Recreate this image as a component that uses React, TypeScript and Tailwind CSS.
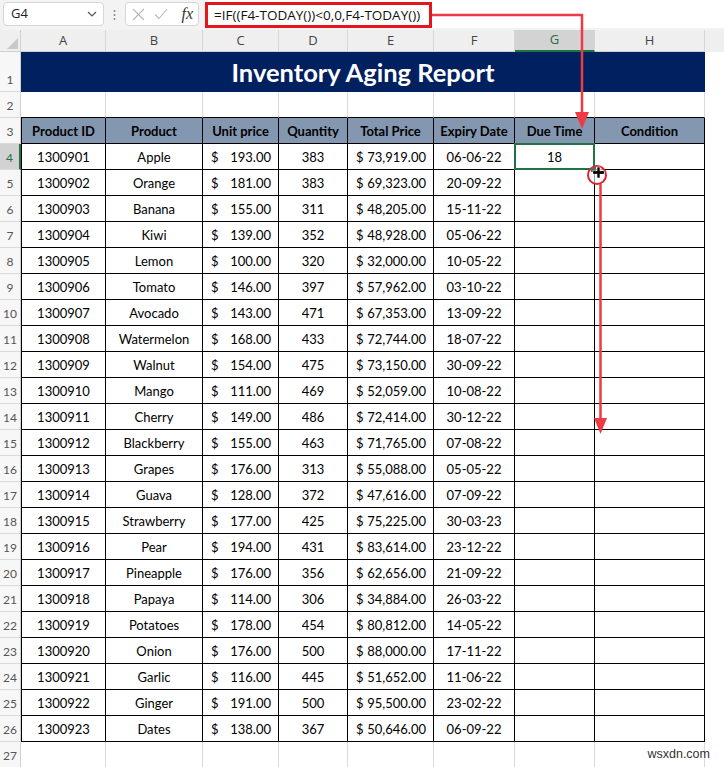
import React from "react";

const rows = [
  ["1300901", "Apple", "193.00", "383", "73,919.00", "06-06-22"],
  ["1300902", "Orange", "181.00", "383", "69,323.00", "20-09-22"],
  ["1300903", "Banana", "155.00", "311", "48,205.00", "15-11-22"],
  ["1300904", "Kiwi", "139.00", "352", "48,928.00", "05-06-22"],
  ["1300905", "Lemon", "100.00", "320", "32,000.00", "10-05-22"],
  ["1300906", "Tomato", "146.00", "397", "57,962.00", "03-10-22"],
  ["1300907", "Avocado", "143.00", "471", "67,353.00", "13-09-22"],
  ["1300908", "Watermelon", "168.00", "433", "72,744.00", "18-07-22"],
  ["1300909", "Walnut", "154.00", "475", "73,150.00", "30-09-22"],
  ["1300910", "Mango", "111.00", "469", "52,059.00", "10-08-22"],
  ["1300911", "Cherry", "149.00", "486", "72,414.00", "30-12-22"],
  ["1300912", "Blackberry", "155.00", "463", "71,765.00", "07-08-22"],
  ["1300913", "Grapes", "176.00", "313", "55,088.00", "05-05-22"],
  ["1300914", "Guava", "128.00", "372", "47,616.00", "07-09-22"],
  ["1300915", "Strawberry", "177.00", "425", "75,225.00", "30-03-23"],
  ["1300916", "Pear", "194.00", "431", "83,614.00", "23-12-22"],
  ["1300917", "Pineapple", "176.00", "356", "62,656.00", "21-09-22"],
  ["1300918", "Papaya", "114.00", "306", "34,884.00", "26-03-22"],
  ["1300919", "Potatoes", "178.00", "454", "80,812.00", "14-05-22"],
  ["1300920", "Onion", "176.00", "500", "88,000.00", "17-11-22"],
  ["1300921", "Garlic", "116.00", "445", "51,652.00", "11-06-22"],
  ["1300922", "Ginger", "191.00", "500", "95,500.00", "23-02-22"],
  ["1300923", "Dates", "138.00", "367", "50,646.00", "06-09-22"],
];

const headers = ["Product ID", "Product", "Unit price", "Quantity", "Total Price", "Expiry Date", "Due Time", "Condition"];
const letters = ["A", "B", "C", "D", "E", "F", "G", "H"];
const widths = ["w-[85px]", "w-[97px]", "w-[76px]", "w-[69px]", "w-[86px]", "w-[81px]", "w-[80px]", "w-[110px]"];

function RowNum({n, h, active}: {n: number; h: string; active?: boolean}) {
  return (
    <div
      className={`${h} w-[21px] shrink-0 flex items-end justify-center pb-[3px] leading-[16px] text-[12px] border-b border-[#dadada] ${
        active ? "bg-[#d2d2d2] text-[#1e6e42] border-r-2 border-r-[#217346]" : "bg-[#f7f7f7] text-[#555] border-r border-r-[#d0d0d0]"
      }`}
    >
      {n}
    </div>
  );
}

function GridRow({n, h, bottomBlack}: {n: number; h: string; bottomBlack?: boolean}) {
  return (
    <div className="flex">
      <RowNum n={n} h={h} />
      {widths.map((w, i) => (
        <div
          key={i}
          className={`${w} ${h} shrink-0 border-r border-r-[#dadada] border-b ${
            bottomBlack ? "border-b-black" : "border-b-[#dadada]"
          }`}
        />
      ))}
    </div>
  );
}

function Money({v}: {v: string}) {
  return (
    <div className="flex h-full items-center justify-between pt-[3px] pl-[8px] pr-[7px]">
      <span>$</span>
      <span>{v}</span>
    </div>
  );
}

function DataRow({r, n}: {r: string[]; n: number}) {
  const cell = "h-[26px] shrink-0 border-r border-b border-black";
  const center = "flex items-center justify-center pt-[3px]";
  const selected = n === 4;
  return (
    <div className="flex">
      <RowNum n={n} h="h-[26px]" active={selected} />
      <div className={`${widths[0]} ${cell} border-l ${center}`}>{r[0]}</div>
      <div className={`${widths[1]} ${cell} ${center}`}>{r[1]}</div>
      <div className={`${widths[2]} ${cell}`}>
        <Money v={r[2]} />
      </div>
      <div className={`${widths[3]} ${cell} ${center}`}>{r[3]}</div>
      <div className={`${widths[4]} ${cell}`}>
        <Money v={r[4]} />
      </div>
      <div className={`${widths[5]} ${cell} ${center}`}>{r[5]}</div>
      <div className={`${widths[6]} ${cell} relative ${center}`}>
        {selected && (
          <>
            <span>18</span>
            <div className="absolute -left-px -top-px -right-px -bottom-px border-2 border-[#217346]" />
          </>
        )}
      </div>
      <div className={`${widths[7]} ${cell}`} />
    </div>
  );
}

export default function App() {
  return (
    <div className="relative w-[724px] h-[767px] overflow-hidden bg-white font-['Lato',sans-serif] text-[13px] text-black">
      {/* formula bar */}
      <div className="flex h-[30px] bg-[#f3f3f3] font-['Open_Sans',sans-serif]">
        <div className="ml-[3px] mt-[2px] w-[101px] h-[24px] bg-white border border-[#d6d6d6] rounded-[4px] flex items-center justify-between pl-[7px] pr-[6px]">
          <span className="text-[13px] text-[#222]">G4</span>
          <svg width="10" height="6" viewBox="0 0 10 6">
            <path d="M1 1 L5 5 L9 1" fill="none" stroke="#555" strokeWidth="1.2" />
          </svg>
        </div>
        <div className="w-[21px] flex items-center justify-center">
          <svg width="3" height="12" viewBox="0 0 3 12">
            <circle cx="1.5" cy="2" r="1" fill="#888" />
            <circle cx="1.5" cy="6" r="1" fill="#888" />
            <circle cx="1.5" cy="10" r="1" fill="#888" />
          </svg>
        </div>
        <div className="mt-[2px] w-[74px] h-[24px] bg-white border border-[#d6d6d6] rounded-[4px] flex items-center pl-[6px] pr-[5px] gap-[9px]">
          <svg width="13" height="13" viewBox="0 0 13 13">
            <path d="M1 1 L12 12 M12 1 L1 12" stroke="#b8b8b8" strokeWidth="1.1" />
          </svg>
          <svg width="14" height="12" viewBox="0 0 14 12">
            <path d="M1 6.5 L5 10.5 L13 1" fill="none" stroke="#b8b8b8" strokeWidth="1.1" />
          </svg>
          <span className="ml-auto font-['Liberation_Serif',serif] italic text-[16px] leading-none text-[#333]">fx</span>
        </div>
        <div className="ml-[6px] flex-1 h-[28px] bg-white">
          <div className="mt-[2px] w-[227px] h-[26px] border-[3px] border-[#e4151d] flex items-center pl-[6px] text-[13.5px] text-[#111]">
            =IF((F4-TODAY())&lt;0,0,F4-TODAY())
          </div>
        </div>
      </div>

      {/* column headers */}
      <div className="flex h-[22px] bg-[#efefef] font-['Open_Sans',sans-serif] text-[13px] text-[#444]">
        <div className="w-[21px] shrink-0 relative border-r border-b border-[#d0d0d0]">
          <svg className="absolute right-[2px] bottom-[2px]" width="11" height="11" viewBox="0 0 11 11">
            <path d="M11 0 L11 11 L0 11 Z" fill="#c8c8c8" />
          </svg>
        </div>
        {letters.map((l, i) => (
          <div
            key={l}
            className={`${widths[i]} shrink-0 flex items-center justify-center border-r border-[#d6d6d6] ${
              l === "G" ? "bg-[#d3d3d3] text-[#1e6e42] border-b-2 border-b-[#217346]" : "border-b border-b-[#d0d0d0]"
            }`}
          >
            {l}
          </div>
        ))}
      </div>

      {/* row 1: title */}
      <div className="flex">
        <RowNum n={1} h="h-[40px]" />
        <div className="w-[684px] h-[40px] bg-[#002060] flex items-center justify-center text-white font-bold text-[25.5px]">
          Inventory Aging Report
        </div>
      </div>

      {/* row 2 */}
      <GridRow n={2} h="h-[26px]" bottomBlack />

      {/* row 3: table header */}
      <div className="flex">
        <RowNum n={3} h="h-[26px]" />
        {headers.map((t, i) => (
          <div
            key={t}
            className={`${widths[i]} h-[26px] shrink-0 bg-[#8497b0] font-bold flex items-center justify-center pt-[3px] border-r border-b border-black ${
              i === 0 ? "border-l" : ""
            }`}
          >
            {t}
          </div>
        ))}
      </div>

      {rows.map((r, i) => (
        <DataRow key={r[0]} r={r} n={i + 4} />
      ))}

      <GridRow n={27} h="h-[26px]" />

      <div className="absolute right-[14px] bottom-[3px] font-['Liberation_Sans',sans-serif] text-[12.5px] text-[#333]">wsxdn.com</div>

      {/* annotation arrows */}
      <svg className="absolute left-0 top-0 pointer-events-none" width="724" height="767">
        <polyline points="432,15 582,15 582,114" fill="none" stroke="#ee3a43" strokeWidth="2.5" />
        <polygon points="575,112 589,112 582,129" fill="#ee3a43" />
        <line x1="600.5" y1="184" x2="600.5" y2="420" stroke="#ee3a43" strokeWidth="2.5" />
        <polygon points="594,418 607,418 600.5,434" fill="#ee3a43" />
        <circle cx="597" cy="175" r="9" fill="rgba(255,255,255,0.6)" stroke="#e0202a" strokeWidth="2" />
        <rect x="591" y="167" width="5" height="5" fill="#666" />
        <rect x="593" y="171" width="11" height="3" fill="#000" stroke="#fff" strokeWidth="0.6" />
        <rect x="597" y="167" width="3" height="11" fill="#000" stroke="#fff" strokeWidth="0.6" />
        <rect x="593.3" y="171.3" width="10.4" height="2.4" fill="#000" />
      </svg>
    </div>
  );
}
